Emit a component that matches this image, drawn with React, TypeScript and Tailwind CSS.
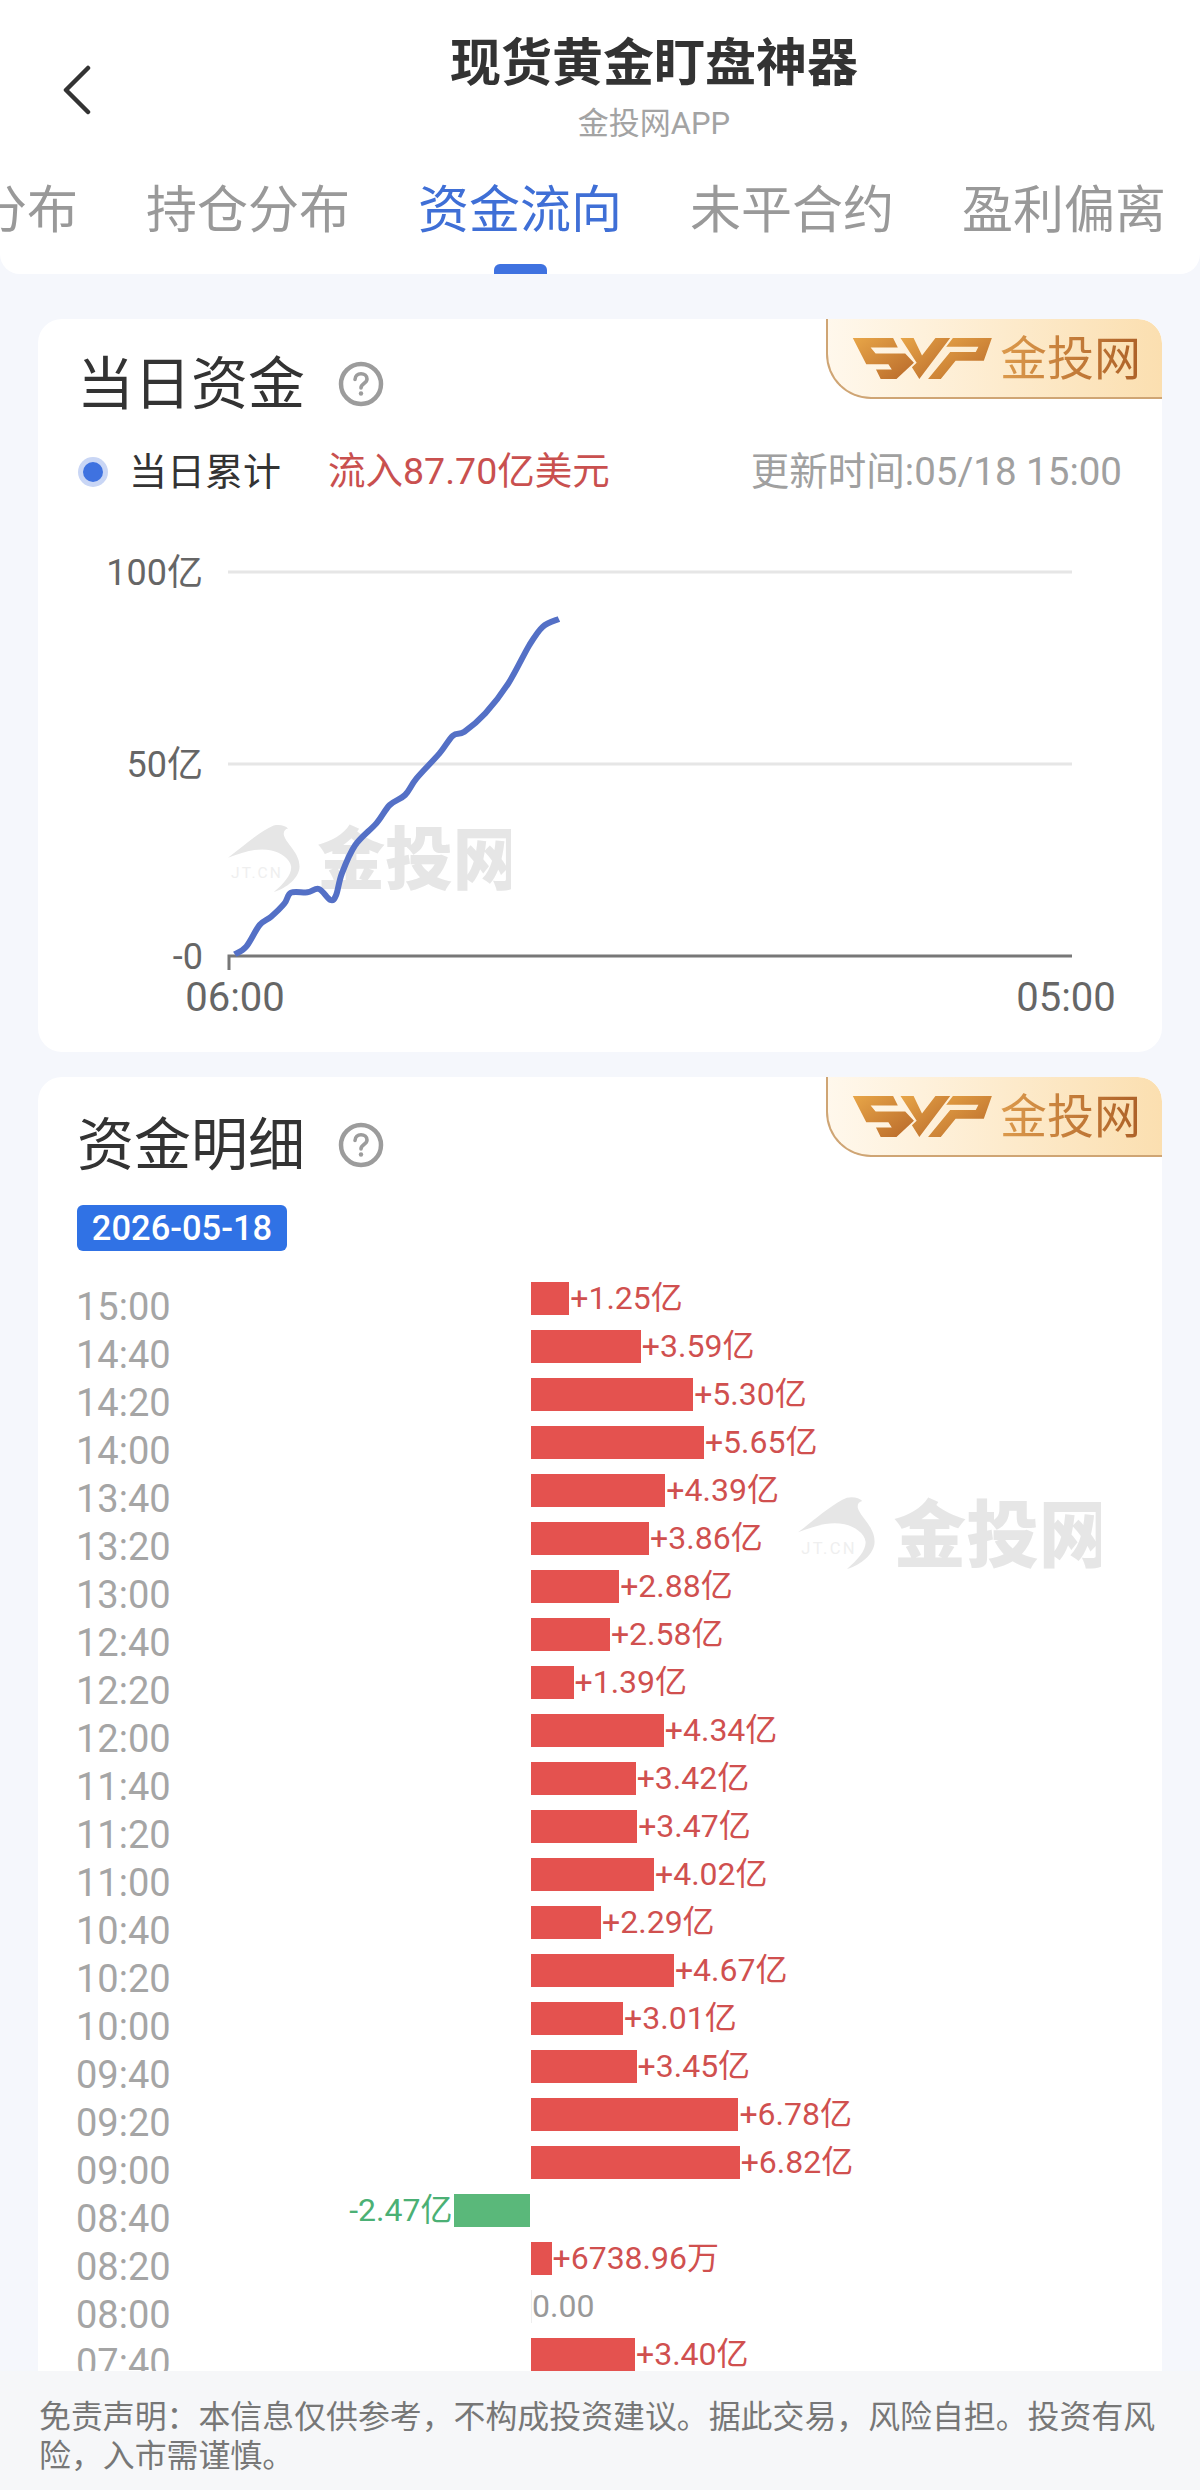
type Row = { time: string; value: number; label: string };

const rows: Row[] = [
  { time: "15:00", value: 1.25, label: "+1.25亿" },
  { time: "14:40", value: 3.59, label: "+3.59亿" },
  { time: "14:20", value: 5.3, label: "+5.30亿" },
  { time: "14:00", value: 5.65, label: "+5.65亿" },
  { time: "13:40", value: 4.39, label: "+4.39亿" },
  { time: "13:20", value: 3.86, label: "+3.86亿" },
  { time: "13:00", value: 2.88, label: "+2.88亿" },
  { time: "12:40", value: 2.58, label: "+2.58亿" },
  { time: "12:20", value: 1.39, label: "+1.39亿" },
  { time: "12:00", value: 4.34, label: "+4.34亿" },
  { time: "11:40", value: 3.42, label: "+3.42亿" },
  { time: "11:20", value: 3.47, label: "+3.47亿" },
  { time: "11:00", value: 4.02, label: "+4.02亿" },
  { time: "10:40", value: 2.29, label: "+2.29亿" },
  { time: "10:20", value: 4.67, label: "+4.67亿" },
  { time: "10:00", value: 3.01, label: "+3.01亿" },
  { time: "09:40", value: 3.45, label: "+3.45亿" },
  { time: "09:20", value: 6.78, label: "+6.78亿" },
  { time: "09:00", value: 6.82, label: "+6.82亿" },
  { time: "08:40", value: -2.47, label: "-2.47亿" },
  { time: "08:20", value: 0.67, label: "+6738.96万" },
  { time: "08:00", value: 0, label: "0.00" },
  { time: "07:40", value: 3.4, label: "+3.40亿" },
];

const tabs = ["分布", "持仓分布", "资金流向", "未平合约", "盈利偏离"];

// traced from the reference, in page pixels
const curve: [number, number][] = [
  [535, 1303], [565, 1280], [600, 1215], [630, 1190], [665, 1150], [682, 1118],
  [725, 1117], [755, 1107], [785, 1140], [800, 1125], [815, 1060], [850, 975],
  [905, 910], [940, 855], [980, 825], [1010, 775], [1070, 700], [1105, 647],
  [1135, 635], [1190, 580], [1250, 490], [1305, 375], [1340, 320], [1382, 297],
].map(([x, y]) => [30 + x / 2.613, 520 + y / 3]);

function smoothPath(pts: [number, number][]) {
  let d = `M${pts[0][0]} ${pts[0][1]}`;
  for (let i = 0; i < pts.length - 1; i++) {
    const p0 = pts[Math.max(0, i - 1)];
    const p1 = pts[i];
    const p2 = pts[i + 1];
    const p3 = pts[Math.min(pts.length - 1, i + 2)];
    d += ` C${p1[0] + (p2[0] - p0[0]) / 6} ${p1[1] + (p2[1] - p0[1]) / 6} ${p2[0] - (p3[0] - p1[0]) / 6} ${p2[1] - (p3[1] - p1[1]) / 6} ${p2[0]} ${p2[1]}`;
  }
  return d;
}

function HelpIcon() {
  return (
    <svg width="46" height="46" viewBox="0 0 46 46" fill="none" className="shrink-0">
      <circle cx="23" cy="23" r="20" stroke="#9c9c9c" strokeWidth="4.5" />
      <path d="M17 18.5c0-3.6 2.7-5.8 6-5.8s6 2.1 6 5.2c0 4.6-6 4.6-6 9" stroke="#9c9c9c" strokeWidth="3.6" strokeLinecap="round" />
      <circle cx="23" cy="32.5" r="2.2" fill="#9c9c9c" />
    </svg>
  );
}

function SvpBadge() {
  return (
    <div className="absolute top-0 right-0 flex h-20 w-[336px] items-center gap-2 rounded-tr-3xl rounded-bl-[45px] border-b-2 border-l-2 border-[#cfa574] bg-gradient-to-r from-[#fff8ec] to-[#fbdfb0] pl-6">
      <svg width="140" height="43" viewBox="220 115 416 128" className="shrink-0">
        <defs>
          <linearGradient id="svp" x1="0" y1="0" x2="1" y2="1">
            <stop offset="0" stopColor="#e8a648" />
            <stop offset="1" stopColor="#b8692a" />
          </linearGradient>
        </defs>
        <polygon fill="url(#svp)" points="222,118 342,118 356,146 275,146 290,164 378,164 404,192 352,240 305,240 291,212 338,212 328,196 262,196" />
        <polygon fill="url(#svp)" points="364,118 403,118 428,170 468,118 512,118 420,240 398,205 412,192" />
        <polygon fill="url(#svp)" points="520,118 636,118 612,186 528,186 484,240 446,240 512,160 588,160 596,144 500,144" />
      </svg>
      <span className="bg-gradient-to-r from-[#dc9a4c] to-[#ad6128] bg-clip-text text-[47px] leading-none text-transparent">金投网</span>
    </div>
  );
}

function WatermarkArt() {
  return (
    <>
      <path
        fill="#e6e6e6"
        d="M115 212C170 170 220 125 262 108C280 104 300 108 308 118C298 120 292 128 295 140C305 170 345 195 345 240C345 275 305 310 262 322C295 295 320 265 318 240C315 215 285 195 255 188C205 178 160 195 115 212Z"
      />
      <text x="125" y="277" fontSize="50" fill="#efefef" textLength="160">JT.CN</text>
      <text x="402" y="297" fontSize="218" fontWeight="900" fill="#e6e6e6">金投网</text>
    </>
  );
}

function DayChart() {
  return (
    <svg viewBox="38 492 1124 558" className="block h-[558px] w-[1124px]">
      <svg x="228" y="823" width="283" height="70" viewBox="115 100 910 225">
        <WatermarkArt />
      </svg>
      <line x1="228" x2="1072" y1="572" y2="572" stroke="#e6e6e6" strokeWidth="3" />
      <line x1="228" x2="1072" y1="764" y2="764" stroke="#e6e6e6" strokeWidth="3" />
      <path d="M229 970V956H1072" fill="none" stroke="#777" strokeWidth="3" />
      <path d={smoothPath(curve)} fill="none" stroke="#5470c6" strokeWidth="6" />
      <g className="fill-[#666] text-[36px]" textAnchor="end">
        <text x="203" y="585">100亿</text>
        <text x="203" y="777">50亿</text>
        <text x="203" y="969">-0</text>
      </g>
      <g className="fill-[#666] text-[40px]" textAnchor="middle">
        <text x="235" y="1011">06:00</text>
        <text x="1066" y="1011">05:00</text>
      </g>
    </svg>
  );
}

function DetailRow({ row }: { row: Row }) {
  const width = Math.abs(row.value) * 30.6;
  const negative = row.value < 0;
  return (
    <div className="flex h-12 items-center">
      <div className="flex w-[455px] items-center justify-between">
        <span className="mt-[18px] text-[38px] leading-none text-[#a5a5a5]">{row.time}</span>
        {negative && (
          <div className="flex items-center gap-0.5 pr-px">
            <span className="text-[32px] leading-none text-[#4bb075]">{row.label}</span>
            <div className="h-[33px] bg-[#5ab87a]" style={{ width }} />
          </div>
        )}
      </div>
      {row.value > 0 && (
        <div className="flex items-center gap-px">
          <div className="h-[33px] bg-[#e4524f]" style={{ width }} />
          <span className="text-[32px] leading-none text-[#d0504f]">{row.label}</span>
        </div>
      )}
      {row.value === 0 && (
        <div className="flex h-[33px] items-center border-l border-[#eeeeee]">
          <span className="text-[32px] leading-none text-[#999999]">{row.label}</span>
        </div>
      )}
    </div>
  );
}

export default function App() {
  return (
    <div className="flex h-[2490px] w-[1200px] flex-col overflow-hidden bg-[#f5f7fc] font-[Roboto,'Noto_Sans_CJK_SC',sans-serif]">
      <header className="relative h-[274px] shrink-0 overflow-hidden rounded-b-[20px] bg-white">
        <div className="flex h-[158px] items-start pt-[33px]">
          <div className="w-[108px] pt-[32px] pl-[62px]">
            <svg width="30" height="50" viewBox="0 0 30 50" fill="none" stroke="#333" strokeWidth="4.5" strokeLinecap="round" strokeLinejoin="round">
              <path d="M26 3L4 25L26 47" />
            </svg>
          </div>
          <div className="flex-1 text-center">
            <div className="text-[51px] leading-[62px] font-semibold text-[#333]">现货黄金盯盘神器</div>
            <div className="mt-[13px] text-[31px] leading-none text-[#a3a3a3]">金投网APP</div>
          </div>
        </div>
        <nav className="-ml-6 flex gap-[68px] whitespace-nowrap">
          {tabs.map((tab) => (
            <span key={tab} className={`h-[116px] text-[51px] leading-[105px] ${tab === "资金流向" ? "text-[#3f6fd6]" : "text-[#999999]"}`}>
              {tab}
            </span>
          ))}
        </nav>
        <div className="absolute bottom-0 left-[494px] h-2.5 w-[53px] rounded-t-md bg-[#3f72e0]" />
      </header>

      <main className="flex min-h-0 flex-1 flex-col gap-[25px] overflow-hidden px-[38px] pt-[45px]">
        <section className="relative h-[733px] shrink-0 overflow-hidden rounded-3xl bg-white">
          <SvpBadge />
          <div className="mt-[37px] ml-[39px] flex h-14 items-center gap-[33px]">
            <h2 className="text-[57px] leading-none font-normal text-[#333]">当日资金</h2>
            <HelpIcon />
          </div>
          <div className="mt-10 flex h-10 items-center pl-10 text-[38px] leading-none">
            <span className="flex h-[30px] w-[30px] items-center justify-center rounded-full bg-[#c9d6f5]">
              <span className="h-5 w-5 rounded-full bg-[#3f72e0]" />
            </span>
            <span className="ml-[21px] text-[#333]">当日累计</span>
            <span className="ml-[47px] text-[37.5px] text-[#c9504f]">流入87.70亿美元</span>
            <span className="mr-10 ml-auto text-[38.5px] text-[#a0a0a0]">更新时间:05/18 15:00</span>
          </div>
          <DayChart />
        </section>

        <section className="relative min-h-0 flex-1 overflow-hidden rounded-t-3xl bg-white">
          <SvpBadge />
          <svg viewBox="115 100 910 225" className="absolute top-[418px] left-[760px] h-[75px] w-[303px]">
            <WatermarkArt />
          </svg>
          <div className="mt-10 ml-[39px] flex h-14 items-center gap-[33px]">
            <h2 className="text-[57px] leading-none font-normal text-[#333]">资金明细</h2>
            <HelpIcon />
          </div>
          <div className="mt-[32px] ml-[39px] flex h-[46px] w-[210px] items-center justify-center rounded-md bg-[#3072e5] text-[34.5px] leading-none font-medium text-white">
            2026-05-18
          </div>
          <div className="relative mt-[23px] pl-[38px]">
            {rows.map((row) => (
              <DetailRow key={row.time} row={row} />
            ))}
          </div>
        </section>
      </main>

      <footer className="h-[119px] shrink-0 bg-[#f6f7f9] px-[39px] pt-[27px] text-[31.9px] leading-[39px] text-[#777777]">
        免责声明：本信息仅供参考，不构成投资建议。据此交易，风险自担。投资有风险，入市需谨慎。
      </footer>
    </div>
  );
}
